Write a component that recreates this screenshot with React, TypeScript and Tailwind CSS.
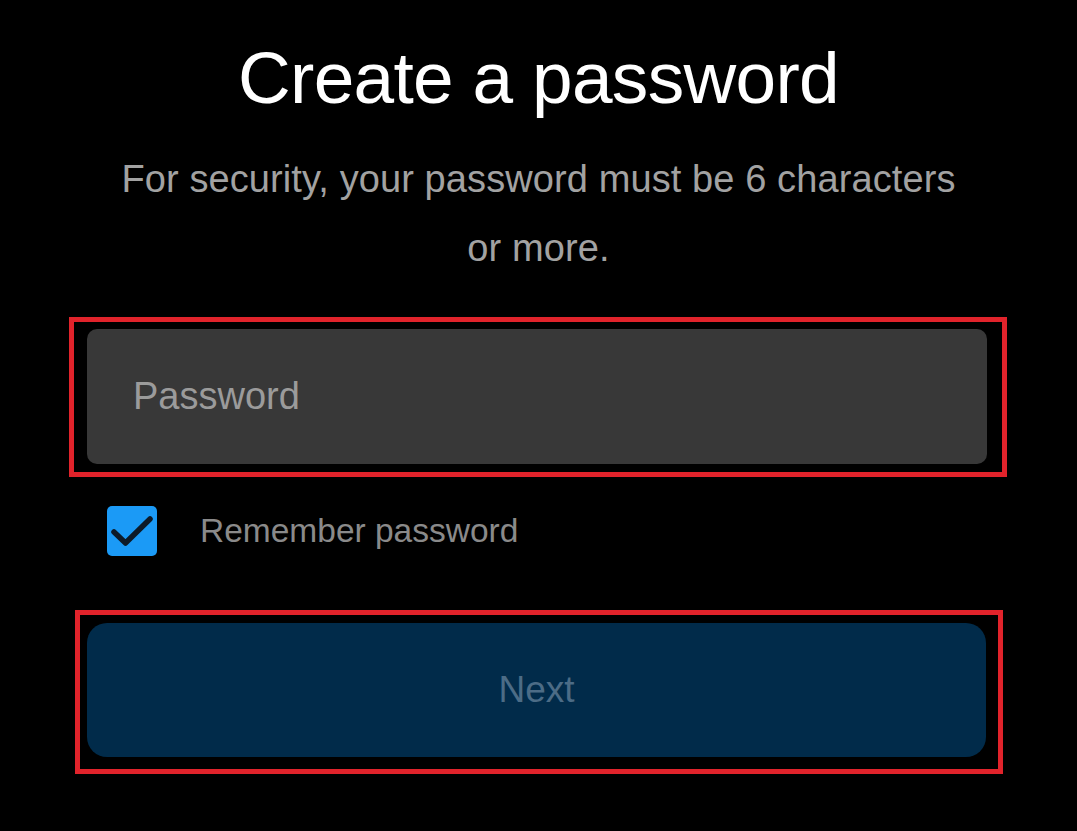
import React from "react";

export default function App() {
  const font = { fontFamily: '"Liberation Sans", Arial, sans-serif' };
  return (
    <div className="w-[1077px] h-[831px] bg-black overflow-hidden" style={font}>
      <h1 className="mt-[38px] text-center text-white text-[73px] leading-[80px] font-normal tracking-[-0.7px]">
        Create a password
      </h1>
      <p className="mt-[27px] mx-auto w-[870px] text-center text-[#a2a2a2] text-[38px] leading-[69px] tracking-[0.1px]">
        For security, your password must be 6 characters or more.
      </p>
      <div className="mt-[34px] ml-[69px] w-[938px] h-[160px] border-[5px] border-[#e1232b] pl-[13px] pr-[15px] pt-[7px]">
        <div className="h-[135px] rounded-[10px] bg-[#383838] flex items-center pl-[46px]">
          <span className="text-[38px] text-[#9b9b9b]">Password</span>
        </div>
      </div>
      <div className="mt-[29px] ml-[107px] flex items-center h-[50px]">
        <div className="w-[50px] h-[50px] rounded-[5px] bg-[#1b9af6] flex items-center justify-center">
          <svg width="50" height="50" viewBox="0 0 50 50">
            <path d="M7 26 L18.5 37 L43 13" fill="none" stroke="#0d1a28" strokeWidth="5.5" strokeLinecap="round" strokeLinejoin="round" />
          </svg>
        </div>
        <span className="ml-[43px] text-[33.5px] text-[#8a8a8a]">Remember password</span>
      </div>
      <div className="mt-[54px] ml-[75px] w-[928px] h-[164px] border-[5px] border-[#e1232b] pl-[7px] pr-[12px] pt-[8px]">
        <div className="h-[134px] rounded-[20px] bg-[#012b4a] flex items-center justify-center">
          <span className="text-[37px] text-[#4c6c86]">Next</span>
        </div>
      </div>
    </div>
  );
}
